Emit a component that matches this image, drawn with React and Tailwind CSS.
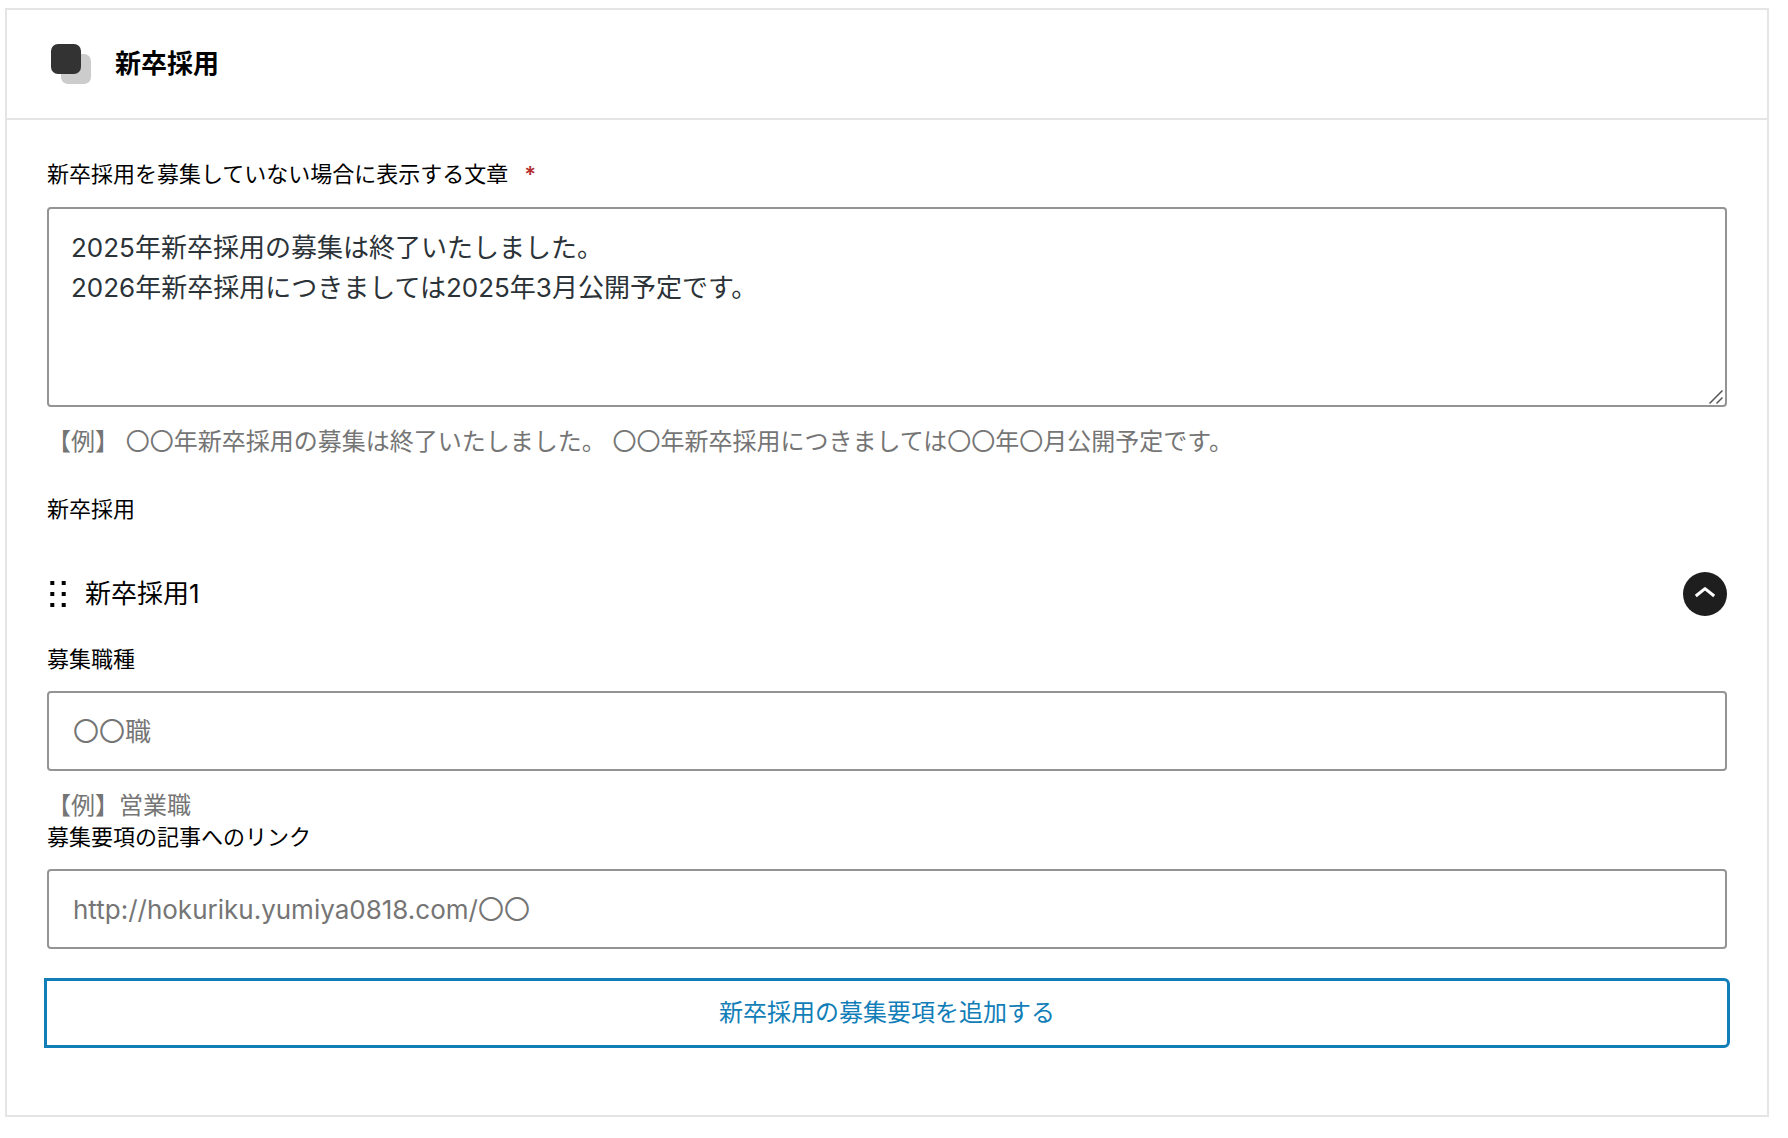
import { useState } from 'react';

const labelClass = "block text-[22px] leading-8 text-black";
const hintClass = "mt-5 text-2xl leading-[30px] text-[#757575]";
const inputClass =
  "mt-4 block h-20 w-full rounded-[4px] border-2 border-[#949494] bg-white px-6 text-[26px] text-[#2c3338] placeholder:text-[#757575]";

function BlockIcon() {
  return (
    <svg width="40" height="40" viewBox="0 0 40 40" aria-hidden="true">
      <rect x="10" y="10" width="30" height="30" rx="7" fill="#cccccc" />
      <rect x="0" y="0" width="30" height="30" rx="7" fill="#333333" />
    </svg>
  );
}

function DragHandle() {
  return (
    <svg width="22" height="32" viewBox="0 0 22 32" fill="#000000" aria-hidden="true">
      <rect x="3.3" y="3" width="4" height="4" />
      <rect x="14.7" y="3" width="4" height="4" />
      <rect x="3.3" y="14" width="4" height="4" />
      <rect x="14.7" y="14" width="4" height="4" />
      <rect x="3.3" y="25" width="4" height="4" />
      <rect x="14.7" y="25" width="4" height="4" />
    </svg>
  );
}

export default function App() {
  const [message, setMessage] = useState(
    "2025年新卒採用の募集は終了いたしました。\n2026年新卒採用につきましては2025年3月公開予定です。"
  );
  const [open, setOpen] = useState(true);

  return (
    <div className="bg-white pt-2 pr-[19px] pb-5 pl-[5px] font-['Inter','Noto_Sans_CJK_JP',sans-serif]">
      <section className="border-2 border-[#e5e5e5]">
        {/* ヘッダー */}
        <header className="flex h-[110px] items-center gap-6 border-b-2 border-[#e5e5e5] px-11">
          <BlockIcon />
          <h2 className="text-[26px] leading-[34px] font-bold text-black">新卒採用</h2>
        </header>

        <div className="px-10 pt-[38px] pb-[67px]">
          {/* 募集していない場合の文章 */}
          <label htmlFor="closed-message" className={labelClass}>
            新卒採用を募集していない場合に表示する文章
            <span className="ml-4 font-semibold text-[#b32d2e]">*</span>
          </label>
          <div className="relative mt-[17px]">
            <textarea
              id="closed-message"
              value={message}
              onChange={(e) => setMessage(e.target.value)}
              className="block h-[200px] w-full resize-y rounded-[4px] border-2 border-[#949494] bg-white px-[22px] py-[19px] text-[26px] leading-10 text-[#2c3338] [&::-webkit-resizer]:bg-transparent"
            />
            <svg
              className="pointer-events-none absolute right-1 bottom-[3px]"
              width="14"
              height="14"
              viewBox="0 0 14 14"
              stroke="#555555"
              strokeWidth="1.5"
              aria-hidden="true"
            >
              <path d="M0.5 13.5 L13.5 0.5 M7.5 13.5 L13.5 7.5" />
            </svg>
          </div>
          <p className={hintClass}>
            【例】 〇〇年新卒採用の募集は終了いたしました。 〇〇年新卒採用につきましては〇〇年〇月公開予定です。
          </p>

          {/* 繰り返しフィールド */}
          <h3 className="mt-9 text-[22px] leading-8 text-black">新卒採用</h3>
          <div className="mt-[47px] flex items-center justify-between">
            <div className="flex items-center gap-4">
              <DragHandle />
              <h4 className="text-[26px] leading-8 text-black">新卒採用1</h4>
            </div>
            <button
              type="button"
              aria-label="開閉"
              aria-expanded={open}
              onClick={() => setOpen(!open)}
              className="flex size-11 items-center justify-center rounded-full bg-[#1e1e1e]"
            >
              <svg
                width="24"
                height="24"
                viewBox="0 0 24 24"
                fill="none"
                stroke="#ffffff"
                strokeWidth="3"
                strokeLinejoin="round"
                aria-hidden="true"
              >
                <path d={open ? "M2.8 14 L12 6.6 L21.2 14" : "M2.8 10 L12 17.4 L21.2 10"} />
              </svg>
            </button>
          </div>

          {open && (
            <div className="mt-[27px]">
              <label htmlFor="job-type" className={labelClass}>募集職種</label>
              <input id="job-type" type="text" placeholder="〇〇職" className={inputClass} />
              <p className={hintClass}>【例】営業職</p>

              <label htmlFor="job-link" className={labelClass}>募集要項の記事へのリンク</label>
              <input
                id="job-link"
                type="url"
                placeholder="http://hokuriku.yumiya0818.com/〇〇"
                className={inputClass}
              />
            </div>
          )}

          {/* 追加 */}
          <div className="-mx-[3px] mt-[29px]">
            <button
              type="button"
              className="h-[70px] w-full rounded-r-[6px] border-3 border-[#117eb8] bg-white text-2xl text-[#117eb8] hover:bg-[#f0f6fc]"
            >
              新卒採用の募集要項を追加する
            </button>
          </div>
        </div>
      </section>
    </div>
  );
}
